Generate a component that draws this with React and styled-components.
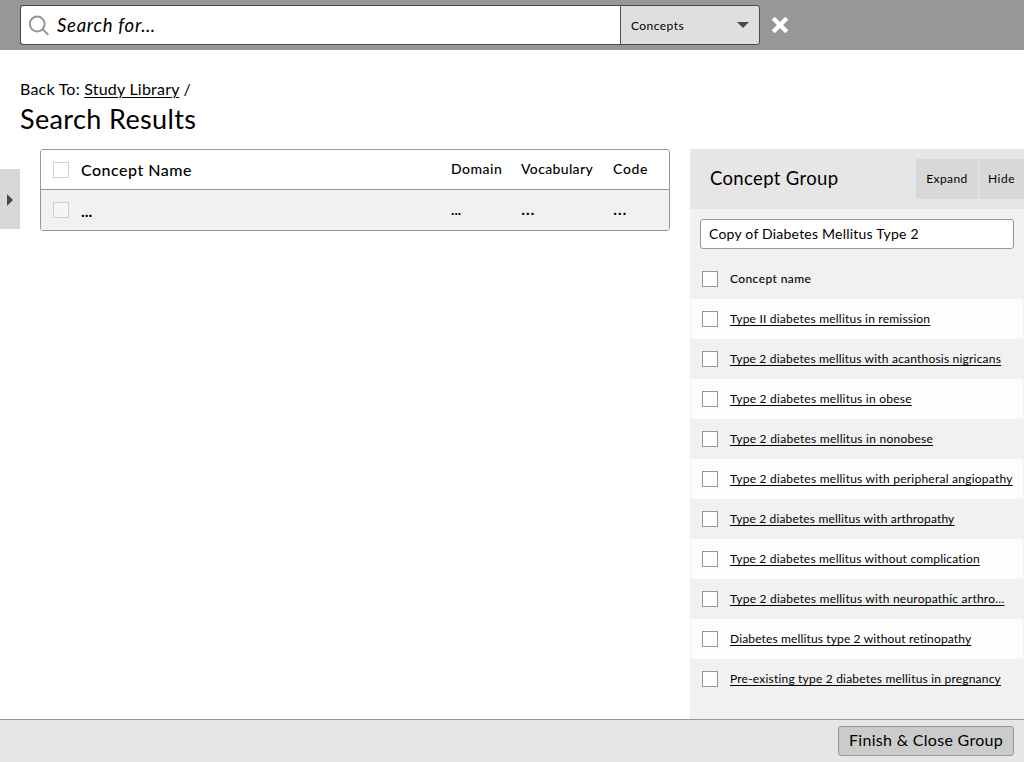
import React from "react";
import styled, { createGlobalStyle } from "styled-components";

const Global = createGlobalStyle`
  * { box-sizing: border-box; }
  body { margin: 0; background: #fff; color: #000; font-family: Lato, "Noto Sans", sans-serif; }
  a { color: inherit; }
`;

const Page = styled.div`
  width: 1024px;
  height: 762px;
  display: flex;
  flex-direction: column;
  overflow: hidden;
`;

const TopBar = styled.header`
  flex: none;
  height: 50px;
  padding: 5px 20px;
  background: #979797;
  display: flex;
`;

const SearchField = styled.div`
  width: 600px;
  height: 40px;
  border: 1px solid #4a4a4a;
  border-right: 0;
  border-radius: 3px 0 0 3px;
  background: #fff;
  display: flex;
  align-items: center;
  padding-left: 7px;
`;

const SearchHint = styled.span`
  margin-left: 8px;
  font-size: 18.5px;
  line-height: 24px;
  font-style: italic;
  letter-spacing: ${(p) => p.$track || 0}px;
`;

const Scope = styled.div`
  width: 140px;
  height: 40px;
  border: 1px solid #4a4a4a;
  border-radius: 0 3px 3px 0;
  background: #dfdfdf;
  display: flex;
  align-items: center;
  justify-content: space-between;
  padding: 0 10px;
  font-size: 12px;
  letter-spacing: ${(p) => p.$track || 0}px;
`;

const CloseIcon = styled.svg`
  margin: 11px 0 0 11px;
`;

const Heading = styled.div`
  flex: none;
  height: 99px;
  padding: 28px 20px 0;
`;

const Crumbs = styled.div`
  font-size: 16px;
  line-height: 22px;
  letter-spacing: ${(p) => p.$track || 0}px;
  a { text-underline-offset: 2px; text-decoration-thickness: 1px; }
`;

const Title = styled.h1`
  margin: 1px 0 0;
  font-size: 27px;
  line-height: 36px;
  font-weight: 400;
  letter-spacing: ${(p) => p.$track || 0}px;
`;

const Main = styled.main`
  flex: 1;
  min-height: 0;
  display: flex;
  align-items: flex-start;
`;

const Handle = styled.div`
  width: 20px;
  height: 60px;
  margin: 20px 20px 0 0;
  background: #d8d8d8;
  display: flex;
  align-items: center;
  padding: 2px 0 0 7px;
`;

const Results = styled.div`
  width: 630px;
  height: 82px;
  border: 1px solid #979797;
  border-radius: 3px;
  overflow: hidden;
`;

const ResultRow = styled.div`
  height: ${(p) => (p.$head ? 40 : 41)}px;
  padding-bottom: ${(p) => (p.$head ? 0 : 2)}px;
  display: grid;
  grid-template-columns: 40px 370px 70px 92px 1fr;
  align-items: center;
  font-weight: 500;
  background: ${(p) => (p.$head ? "#fff" : "#f1f1f1")};
  border-bottom: ${(p) => (p.$head ? "1px solid #979797" : "0")};
`;

const Cell = styled.span`
  font-size: ${(p) => p.$size || 14}px;
  font-weight: ${(p) => (p.$strong ? 700 : "inherit")};
  line-height: 20px;
  letter-spacing: ${(p) => p.$track || 0}px;
  padding-top: ${(p) => p.$drop || 0}px;
  padding-bottom: ${(p) => p.$lift || 0}px;
`;

const Box = styled.span`
  flex: none;
  width: 16px;
  height: 16px;
  margin-left: ${(p) => (p.$faint ? 12 : 0)}px;
  border: 1px solid ${(p) => (p.$faint ? "#d0d0d0" : "#979797")};
  background: ${(p) => (p.$clear ? "#f5f5f5" : "#fff")};
`;

const Panel = styled.aside`
  width: 334px;
  height: 570px;
  margin-left: 20px;
  background: #f1f1f1;
`;

const PanelHead = styled.div`
  height: 60px;
  padding-left: 20px;
  background: #e6e6e6;
  display: flex;
  align-items: center;
`;

const PanelTitle = styled.h2`
  margin: 0;
  padding-bottom: 2px;
  flex: 1;
  font-size: 18.5px;
  font-weight: 400;
  letter-spacing: ${(p) => p.$track || 0}px;
`;

const PanelButton = styled.button`
  width: ${(p) => p.$width}px;
  height: 40px;
  margin: 0 0 0 ${(p) => p.$gap || 0}px;
  border: 0;
  padding: 0 0 2px;
  background: #d8d8d8;
  color: #000;
  font: 12px Lato, sans-serif;
  letter-spacing: ${(p) => p.$track || 0}px;
`;

const NameField = styled.div`
  height: 30px;
  margin: 10px 10px 10px;
  border: 1px solid #979797;
  border-radius: 3px;
  background: #fff;
  padding-left: 8px;
  font-size: 14px;
  line-height: 28px;
  letter-spacing: ${(p) => p.$track || 0}px;
`;

const ConceptRow = styled.div`
  height: 40px;
  margin: 0 1px;
  padding-left: 11px;
  display: flex;
  align-items: center;
  gap: 12px;
  background: ${(p) => (p.$light ? "#fdfdfd" : "#f1f1f1")};
  font-size: 12px;
  font-weight: ${(p) => (p.$head ? 500 : 400)};
`;

const Label = styled.span`
  line-height: 18px;
  white-space: nowrap;
  letter-spacing: ${(p) => p.$track || 0}px;
`;

const ConceptLink = styled(Label).attrs({ as: "a", href: "#" })`
  text-decoration: underline;
  text-decoration-thickness: 1px;
  text-underline-offset: 2px;
  text-decoration-skip-ink: none;
`;

const Footer = styled.footer`
  flex: none;
  height: 43px;
  border-top: 1px solid #979797;
  background: #e6e6e6;
  display: flex;
  justify-content: flex-end;
  padding: 6px 10px 0 0;
`;

const FinishButton = styled.button`
  width: 176px;
  height: 30px;
  padding: 0 0 3px;
  border: 1px solid #979797;
  border-radius: 3px;
  background: #cbcbcb;
  color: #000;
  font: 16px Lato, sans-serif;
  letter-spacing: ${(p) => p.$track || 0}px;
`;

const concepts = [
  ["Type II diabetes mellitus in remission", 0.21],
  ["Type 2 diabetes mellitus with acanthosis nigricans", 0.2],
  ["Type 2 diabetes mellitus in obese", 0.24],
  ["Type 2 diabetes mellitus in nonobese", 0.25],
  ["Type 2 diabetes mellitus with peripheral angiopathy", 0.24],
  ["Type 2 diabetes mellitus with arthropathy", 0.16],
  ["Type 2 diabetes mellitus without complication", 0.2],
  ["Type 2 diabetes mellitus with neuropathic arthro…", 0.23],
  ["Diabetes mellitus type 2 without retinopathy", 0.14],
  ["Pre-existing type 2 diabetes mellitus in pregnancy", 0.2],
];

export default function App() {
  return (
    <Page>
      <Global />
      <TopBar>
        <SearchField>
          <svg width="21" height="21" viewBox="0 0 21 21" fill="none" stroke="#979797" strokeWidth="2">
            <circle cx="9.2" cy="9" r="7.4" />
            <path d="M14.3 14L20.3 19.7" />
          </svg>
          <SearchHint $track={0.72}>Search for…</SearchHint>
        </SearchField>
        <Scope $track={0.45}>
          Concepts
          <svg width="12" height="6" viewBox="0 0 12 6"><path d="M0 0H12L6 6Z" fill="#4a4a4a" /></svg>
        </Scope>
        <CloseIcon width="18" height="18" viewBox="0 0 18 18" stroke="#fff" strokeWidth="4.4">
          <path d="M2.2 2.2L15.8 15.8M15.8 2.2L2.2 15.8" />
        </CloseIcon>
      </TopBar>
      <Heading>
        <Crumbs $track={0.22}>Back To: <a href="#">Study Library</a> /</Crumbs>
        <Title $track={0.37}>Search Results</Title>
      </Heading>
      <Main>
        <Handle>
          <svg width="6" height="12" viewBox="0 0 6 12"><path d="M0 0L6 6L0 12Z" fill="#4a4a4a" /></svg>
        </Handle>
        <Results>
          <ResultRow $head>
            <Box $faint />
            <Cell $size={16} $track={0.5}>Concept Name</Cell>
            <Cell $lift={2} $track={0.5}>Domain</Cell>
            <Cell $lift={2} $track={0.35}>Vocabulary</Cell>
            <Cell $lift={2} $track={0.7}>Code</Cell>
          </ResultRow>
          <ResultRow>
            <Box $faint $clear />
            <Cell $size={16} $drop={2} $strong>...</Cell>
            <Cell $track={0.1} $strong>...</Cell>
            <Cell $size={18} $lift={4}>…</Cell>
            <Cell $size={18} $lift={4}>…</Cell>
          </ResultRow>
        </Results>
        <Panel>
          <PanelHead>
            <PanelTitle $track={0.35}>Concept Group</PanelTitle>
            <PanelButton $width={62} $track={0.4}>Expand</PanelButton>
            <PanelButton $width={45} $gap={1} $track={0.5}>Hide</PanelButton>
          </PanelHead>
          <NameField $track={0.22}>Copy of Diabetes Mellitus Type 2</NameField>
          <ConceptRow $head>
            <Box />
            <Label $track={0.4}>Concept name</Label>
          </ConceptRow>
          {concepts.map(([name, track], i) => (
            <ConceptRow key={name} $light={i % 2 === 0}>
              <Box />
              <ConceptLink $track={track}>{name}</ConceptLink>
            </ConceptRow>
          ))}
        </Panel>
      </Main>
      <Footer>
        <FinishButton $track={0.3}>Finish &amp; Close Group</FinishButton>
      </Footer>
    </Page>
  );
}
